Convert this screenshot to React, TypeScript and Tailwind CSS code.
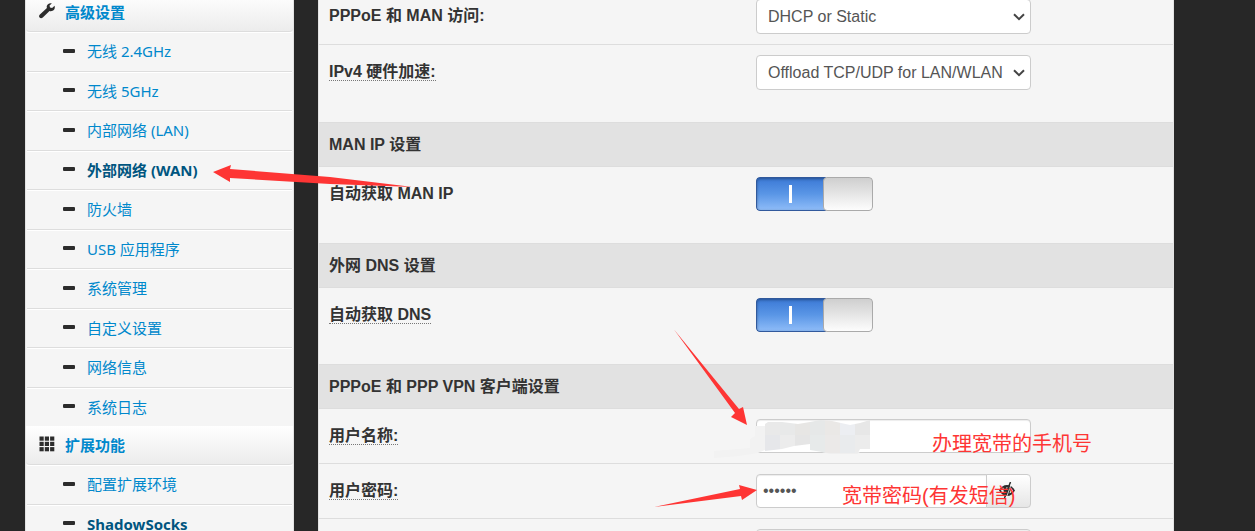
import { Fragment, type ReactNode } from "react";

const advanced = [
  "无线 2.4GHz",
  "无线 5GHz",
  "内部网络 (LAN)",
  "外部网络 (WAN)",
  "防火墙",
  "USB 应用程序",
  "系统管理",
  "自定义设置",
  "网络信息",
  "系统日志",
];

const extensions = ["配置扩展环境", "ShadowSocks"];

const highlighted = ["外部网络 (WAN)", "ShadowSocks"];

const fieldClass =
  "h-[34px] w-[275px] rounded border border-[#ccc] bg-white px-[6px] text-base text-[#555] shadow-[inset_0_1px_1px_rgba(0,0,0,0.075)] outline-none";

function MenuHeader({ icon, children }: { icon: ReactNode; children: ReactNode }) {
  return (
    <a
      href="#"
      className="flex h-[39px] items-center gap-[10px] rounded-b border-b border-[#ddd] bg-linear-to-b from-white to-[#ececec] pl-[13px] font-bold text-[#0088cc]"
    >
      {icon}
      <span>{children}</span>
    </a>
  );
}

function MenuList({ items }: { items: string[] }) {
  return (
    <ul className="px-px">
      {items.map((item) => (
        <li
          key={item}
          className="h-10 border-b border-[#ddd] shadow-[inset_0_1px_0_#fff] last:border-b-0 even:h-[39px] even:last:h-[38px]"
        >
          <a
            href="#"
            className={`flex h-full items-center gap-3 pb-px pl-9 ${
              highlighted.includes(item) ? "font-bold text-[#005580]" : "text-[#0088cc]"
            }`}
          >
            <span className="mb-px h-1 w-3 rounded-[1px] bg-[#2c2c2c]" />
            <span>{item}</span>
          </a>
        </li>
      ))}
    </ul>
  );
}

function SectionHead({ children }: { children: ReactNode }) {
  return (
    <tr className="border-t border-[#ddd]">
      <th colSpan={2} className="h-11 bg-[#e2e2e2] px-[10px] text-left">
        {children}
      </th>
    </tr>
  );
}

type RowProps = { label: string; id: string; hint?: boolean; last?: boolean; children: ReactNode };

function Row({ label, id, hint, last, children }: RowProps) {
  return (
    <tr className="border-t border-[#ddd]">
      <th className="w-1/2 px-[10px] pt-[15px] text-left align-top leading-6">
        <label htmlFor={id} className={hint ? "border-b border-dotted border-[#777]" : ""}>
          {label}
        </label>
      </th>
      <td className={`px-[10px] pt-[10px] ${last ? "pb-8" : "pb-[10px]"}`}>{children}</td>
    </tr>
  );
}

function Select({ id, value }: { id: string; value: string }) {
  return (
    <div className="relative w-[275px]">
      <select
        id={id}
        className="block h-[35px] w-full appearance-none rounded border border-[#ccc] bg-white pr-[27px] pl-[11px] text-base text-[#555]"
      >
        <option>{value}</option>
      </select>
      <svg
        viewBox="0 0 12 8"
        className="pointer-events-none absolute top-[14px] right-[6px] h-2 w-3 fill-none stroke-[#444] stroke-2"
      >
        <path d="M1 1.2 6 6.2 11 1.2" />
      </svg>
    </div>
  );
}

function Toggle({ id }: { id: string }) {
  return (
    <label className="relative flex h-[34px] w-[117px] overflow-hidden rounded">
      <input id={id} type="checkbox" defaultChecked className="sr-only" />
      <span className="flex w-[70px] items-center justify-center rounded-l border border-r-0 border-[#31599c] bg-linear-to-b from-[#3b79d6] via-[#5a96e6] to-[#8ebcf8] pr-[2px] shadow-[inset_0_1px_3px_rgba(0,0,0,0.35)]">
        <span className="h-[18px] w-[3px] bg-white" />
      </span>
      <span className="-ml-[3px] flex-1 rounded border border-[#aaa] bg-linear-to-b from-[#cfcfcf] to-[#fdfdfd]" />
    </label>
  );
}

function Wrench() {
  return (
    <svg viewBox="0 0 16 16" className="mb-[2px] size-4 fill-[#2c2c2c]">
      <path d="M15.6 2.8 13.1 5.1 11 4.6 10.5 2.6 12.8.4C10.9-.3 8.6.6 7.9 2.7c-.3.9-.2 1.700 0 2.300L.9 11.400c-1 .9-1.100 2.300-.3 3.200.8.9 2.200.9 3.200-.1l6.700-6.500c1 .4 2.200.3 3.100-.2 1.800-.9 2.600-2.900 2-5Z" />
    </svg>
  );
}

function Grid() {
  return (
    <svg viewBox="0 0 16 16" className="mb-[2px] size-4 fill-[#2c2c2c]">
      {[0.5, 5.8, 11.1].map((y) => (
        <Fragment key={y}>
          <rect x="0.5" y={y} width="4.2" height="4.2" />
          <rect x="5.8" y={y} width="4.2" height="4.2" />
          <rect x="11.1" y={y} width="4.2" height="4.2" />
        </Fragment>
      ))}
    </svg>
  );
}

function EyeClosed() {
  return (
    <svg viewBox="0 0 16 16" className="mr-[3px] mb-[2px] size-4">
      <path d="M0 8.500C2 5 4.500 3 8 3s6 2 8 5.500C14 12 11.500 14 8 14S2 12 0 8.500Z" fill="#2c2c2c" />
      <path d="M2 8.700C2.800 7.300 3.700 6.300 4.800 5.600c-.6 1.800-.4 4 .8 5.700C4.200 10.800 3 10 2 8.700Z" fill="#f4f4f4" />
      <path d="M14 8.700c-.8-1.400-1.700-2.400-2.800-3.100.6 1.800.4 4-.8 5.700 1.400-.5 2.600-1.300 3.600-2.600Z" fill="#f4f4f4" />
      <path d="M7 6.200c1-.6 2-.4 2.600.2" fill="none" stroke="#f4f4f4" />
      <path d="m11.500 0-6 16" stroke="#2c2c2c" strokeWidth="1.500" />
      <path d="m12.700 1-5.500 15" stroke="#f4f4f4" strokeWidth="0.800" />
    </svg>
  );
}

// hand-drawn notes laid over the form
function Notes() {
  return (
    <div className="pointer-events-none absolute inset-0 text-[20px] leading-6 text-[#fe3534] font-['Liberation_Sans','Noto_Sans_CJK_SC',sans-serif]">
      <svg viewBox="0 0 1255 531" className="absolute top-0 left-0 h-[531px] w-[1255px] fill-[#fe3534]">
        <path d="M213 172 231 165 230 169 330 177 413 187 330 184 230 178 230 182Z" />
        <path d="M674 329.5 739 409 743 407 747 425 731 417 735 413Z" />
        <path d="M654 507 740 489 739 485 757 490 742 500 741 496Z" />
      </svg>
      <p className="absolute top-[432px] left-[932px]">办理宽带的手机号</p>
      <p className="absolute top-[484px] left-[842px]">宽带密码(有发短信)</p>
    </div>
  );
}

const smudgeColumns = [
  ["#e9e9e9", "#e6e7ea"],
  ["#e8e9e9", "#ececec"],
  ["#e7e6e4", "#e5e5e5"],
  ["#e6e8e8", "#e7eaea"],
  ["#eae8e6", "#ebe9e8"],
  ["#eceef2", "#e9ebed"],
  ["#e7e7e7", "#ececec"],
];

function Smudge() {
  return (
    <svg
      viewBox="0 0 180 50"
      className="pointer-events-none absolute -top-[7px] -left-[46px] h-[50px] w-[180px]"
    >
      <clipPath id="smudge">
        <path d="M55 12 58 10 72 10 88 12 100 10 110 8 122 9 140 13 150 11 160 8V37H150L148 41H118L100 38V32L84 34 72 37 55 39Z" />
      </clipPath>
      <path d="M4 39 40 36V27L45 24V14H55V38L47 41 30 44 4 46Z" fill="#f2f2f2" />
      <path d="M112 40H150L147 42H120Z" fill="#efefef" />
      <g clipPath="url(#smudge)">
        {smudgeColumns.map(([top, bottom], i) => (
          <Fragment key={i}>
            <rect x={55 + i * 15} y="0" width="15" height="23" fill={top} />
            <rect x={55 + i * 15} y="23" width="15" height="27" fill={bottom} />
          </Fragment>
        ))}
      </g>
    </svg>
  );
}

export default function App() {
  return (
    <div className="relative h-screen overflow-hidden bg-[#272727]">
      <div className="flex gap-6 pr-[81px] pl-[25px]">
        <aside className="-mt-[7px] w-[269px] shrink-0 border-x border-[#e3e3e3] bg-[#f5f5f5] font-['Noto_Sans','Noto_Sans_CJK_SC',sans-serif] text-[15px] leading-5">
          <MenuHeader icon={<Wrench />}>高级设置</MenuHeader>
          <MenuList items={advanced} />
          <MenuHeader icon={<Grid />}>扩展功能</MenuHeader>
          <MenuList items={extensions} />
        </aside>

        <main className="-mt-3 min-w-0 flex-1 border-x border-[#e3e3e3] bg-[#f5f5f5] font-['Liberation_Sans','Noto_Sans_CJK_SC',sans-serif] text-base text-[#333]">
          <table className="w-full table-fixed border-collapse">
            <tbody>
              <Row id="man-access" label="PPPoE 和 MAN 访问:">
                <Select id="man-access" value="DHCP or Static" />
              </Row>
              <Row id="offload" label="IPv4 硬件加速:" hint last>
                <Select id="offload" value="Offload TCP/UDP for LAN/WLAN" />
              </Row>

              <SectionHead>MAN IP 设置</SectionHead>
              <Row id="man-ip" label="自动获取 MAN IP" last>
                <Toggle id="man-ip" />
              </Row>

              <SectionHead>外网 DNS 设置</SectionHead>
              <Row id="wan-dns" label="自动获取 DNS" hint last>
                <Toggle id="wan-dns" />
              </Row>

              <SectionHead>PPPoE 和 PPP VPN 客户端设置</SectionHead>
              <Row id="user" label="用户名称:" hint>
                <div className="relative">
                  <input id="user" type="text" className={`block ${fieldClass}`} />
                  <Smudge />
                </div>
              </Row>
              <Row id="password" label="用户密码:" hint>
                <div className="flex w-[275px]">
                  <input
                    id="password"
                    type="password"
                    defaultValue="secret"
                    className={`min-w-0 flex-1 rounded-r-none ${fieldClass}`}
                  />
                  <button
                    type="button"
                    aria-label="显示密码"
                    className="-ml-px flex w-[45px] items-center justify-center rounded-r border border-[#ccc] bg-linear-to-b from-white to-[#e6e6e6]"
                  >
                    <EyeClosed />
                  </button>
                </div>
              </Row>
              <Row id="service" label="">
                <input id="service" type="text" className={`block ${fieldClass}`} />
              </Row>
            </tbody>
          </table>
        </main>
      </div>
      <Notes />
    </div>
  );
}
